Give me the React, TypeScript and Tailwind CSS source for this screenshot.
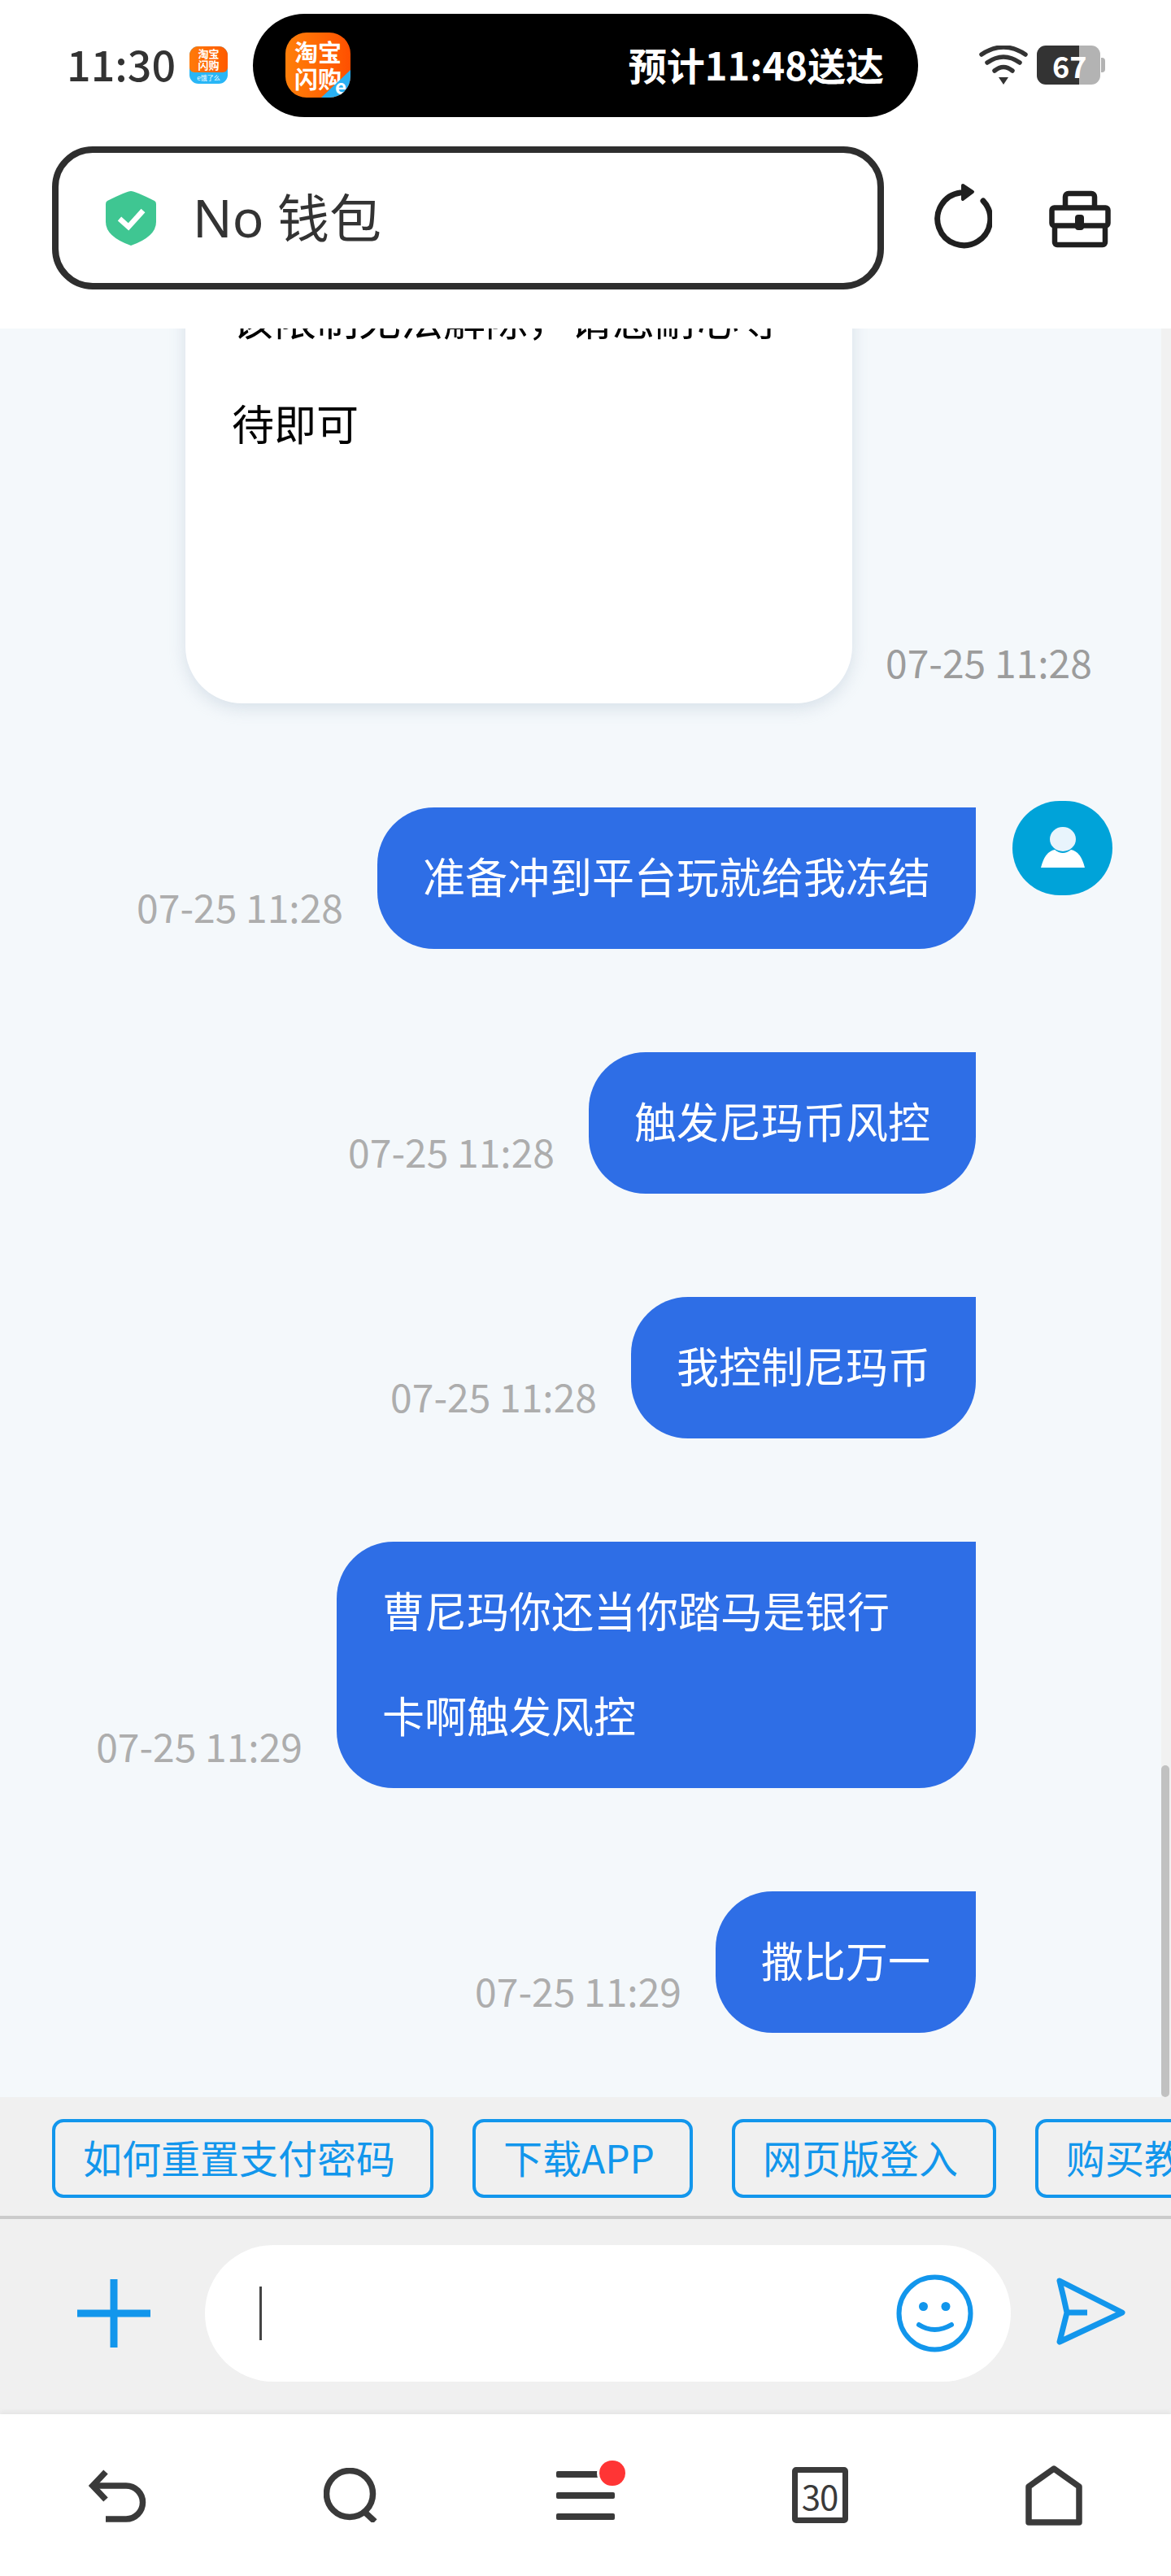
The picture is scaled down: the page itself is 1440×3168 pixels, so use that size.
import React from 'react';

const cjk = 'font-["Noto_Sans_CJK_SC","Noto_Sans",sans-serif]';

const messages = [
  { text: '准备冲到平台玩就给我冻结', time: '07-25 11:28', avatar: true },
  { text: '触发尼玛币风控', time: '07-25 11:28' },
  { text: '我控制尼玛币', time: '07-25 11:28' },
  { text: '曹尼玛你还当你踏马是银行卡啊触发风控', time: '07-25 11:29' },
  { text: '撒比万一', time: '07-25 11:29' },
];

const chips = ['如何重置支付密码', '下载APP', '网页版登入', '购买教程'];

function SmallAppIcon() {
  return (
    <div className="flex h-[46px] w-[47px] shrink-0 flex-col overflow-hidden rounded-[11px] bg-[#29b6f6] font-bold text-white">
      <div className="flex h-[32px] flex-col items-center justify-center rounded-b-[6px] bg-gradient-to-r from-[#ff7a0a] to-[#ff5a00] text-[13px] leading-[14px]">
        <span>淘宝</span>
        <span>闪购</span>
      </div>
      <div className="flex flex-1 items-center justify-center text-[8px] leading-none font-normal">e饿了么</div>
    </div>
  );
}

function AppIcon() {
  return (
    <div className="relative flex h-[80px] w-[80px] shrink-0 flex-col items-center justify-center overflow-hidden rounded-[26px] bg-gradient-to-r from-[#ff7f0a] to-[#ff4f00] text-[29px] leading-[33px] font-bold text-white">
      <span>淘宝</span>
      <span>闪购</span>
      <svg className="absolute right-0 bottom-0" width="36" height="34" viewBox="0 0 36 34">
        <polygon points="36,0 36,34 0,34" fill="#2ab0f2" />
      </svg>
      <span className="absolute right-[5px] bottom-[2px] text-[24px] leading-[24px] font-bold text-white">e</span>
    </div>
  );
}

function Wifi() {
  return (
    <svg width="60" height="48" viewBox="0 0 60 48" fill="none" stroke="#333" strokeWidth="5.5" strokeLinecap="round">
      <path d="M3 11Q30 -7 57 11" />
      <path d="M10 21Q30 7 50 21" />
      <path d="M19 31Q30 22 41 31" />
      <polygon points="24,39 36,39 30,48" fill="#333" stroke="none" />
    </svg>
  );
}

function Battery() {
  return (
    <div className="flex h-[48px] items-center">
      <div className="relative z-10 flex h-full w-[52px] items-center rounded-l-[11px] bg-[#333] pl-[19px] text-[36px] leading-none font-bold whitespace-nowrap text-white">
        67
      </div>
      <div className="h-full w-[26px] rounded-r-[11px] bg-[#b3b3b3]" />
      <div className="ml-[1px] h-[18px] w-[5px] rounded-r-[4px] bg-[#b3b3b3]" />
    </div>
  );
}

function Shield() {
  return (
    <svg width="62" height="67" viewBox="0 0 62 67" className="shrink-0">
      <path d="M31 0Q36 0 60 12Q62 13 62 16V38Q62 56 31 67Q0 56 0 38V16Q0 13 2 12Q26 0 31 0Z" fill="#3fc692" />
      <path d="M17 34L28 44L46 24" fill="none" stroke="#fff" strokeWidth="6.5" />
    </svg>
  );
}

function RefreshIcon() {
  return (
    <svg width="77" height="82" viewBox="0 0 77 82" fill="none" stroke="#1f1f1f" strokeWidth="7" strokeLinecap="round">
      <path d="M66 22A32.5 32.5 0 1 1 38 12" />
      <polygon points="41,3 53,11 41,20" fill="#1f1f1f" strokeWidth="4" strokeLinejoin="round" />
    </svg>
  );
}

function ToolboxIcon() {
  return (
    <svg width="76" height="75" viewBox="0 0 76 75" fill="none" stroke="#1f1f1f" strokeWidth="6.5" strokeLinejoin="round">
      <rect x="3.5" y="25.5" width="69" height="22" rx="3" />
      <path d="M20 25V12a4 4 0 0 1 4-4H52a4 4 0 0 1 4 4V25" />
      <path d="M7 47V68a3 3 0 0 0 3 3H66a3 3 0 0 0 3-3V47" />
      <rect x="32" y="34" width="11" height="19" rx="4" fill="#1f1f1f" stroke="none" />
    </svg>
  );
}

function Bubble({ text, time, avatar }: { text: string; time: string; avatar?: boolean }) {
  return (
    <div className="flex items-start justify-end">
      <div className="flex items-end">
        <span className="mr-[42px] mb-[29px] text-[48px] leading-none whitespace-nowrap text-[#adadad]">{time}</span>
        <div className="max-w-[786px] rounded-[70px] rounded-tr-none bg-[#2e6ee6] px-[56px] pt-[19px] pb-[26px] text-[52px] leading-[129px] text-white">
          {text}
        </div>
      </div>
      {avatar ? (
        <div className="-mt-[8px] ml-[45px] flex h-[116px] w-[123px] shrink-0 items-center justify-center rounded-full bg-[#00a3d9]">
          <svg width="56" height="52" viewBox="0 0 56 52" fill="#fff">
            <ellipse cx="28" cy="15" rx="16" ry="15" fill="#e8f4fc" />
            <path d="M1 50Q6 30 18 28Q28 36 38 28Q50 30 55 50Z" />
          </svg>
        </div>
      ) : (
        <div className="ml-[45px] w-[123px] shrink-0" />
      )}
    </div>
  );
}

export default function App() {
  return (
    <div className={`flex h-[3168px] w-[1440px] flex-col overflow-hidden bg-white ${cjk}`}>
      {/* status bar */}
      <div className="flex h-[160px] shrink-0 items-center pl-[82px]">
        <span className="mb-[4px] w-[128px] text-[52px] leading-none font-medium text-[#333]">11:30</span>
        <div className="ml-[23px]">
          <SmallAppIcon />
        </div>
        <div className="ml-[31px] flex h-[127px] w-[818px] items-center justify-between rounded-full bg-black pr-[42px] pl-[40px]">
          <AppIcon />
          <span className="mb-[4px] text-[47px] leading-none font-bold whitespace-nowrap text-white">预计11:48送达</span>
        </div>
        <div className="ml-[75px]">
          <Wifi />
        </div>
        <div className="ml-[11px]">
          <Battery />
        </div>
      </div>

      {/* address bar */}
      <div className="flex h-[244px] shrink-0 items-start pt-[20px] pl-[64px]">
        <div className="flex h-[176px] w-[1023px] items-center rounded-[50px] border-[8px] border-[#2e2e2e] pl-[58px]">
          <Shield />
          <span className='ml-[45px] font-["Noto_Sans","Noto_Sans_CJK_SC",sans-serif] text-[64px] leading-none text-[#333]'>No 钱包</span>
        </div>
        <div className="mt-[45px] ml-[56px]">
          <RefreshIcon />
        </div>
        <div className="mt-[50px] ml-[70px]">
          <ToolboxIcon />
        </div>
      </div>

      {/* chat */}
      <div className="flex h-[2175px] shrink-0 bg-[#f4f8fb]">
        <div className="flex min-w-0 flex-1 flex-col justify-end gap-[127px] overflow-hidden pr-[60px] pb-[79px]">
          <div className="ml-[228px] flex shrink-0 items-end">
            <div className="mb-[1px] w-[820px] rounded-[70px] rounded-tr-none bg-white px-[57px] pt-[22px] pb-[281px] text-[52px] leading-[129px] text-black shadow-[0_6px_20px_rgba(180,195,210,0.45)]">
              该限制无法解除，请您耐心等待即可
            </div>
            <span className="mb-[29px] ml-[41px] text-[48px] leading-none whitespace-nowrap text-[#9c9c9c]">07-25 11:28</span>
          </div>
          {messages.map((m, i) => (
            <div key={i} className="shrink-0">
              <Bubble text={m.text} time={m.time} avatar={m.avatar} />
            </div>
          ))}
        </div>
        {/* scrollbar */}
        <div className="flex w-[12px] shrink-0 flex-col justify-end bg-[#f1f1f1]">
          <div className="h-[408px] w-[10px] rounded-full bg-[#c1c1c1]" />
        </div>
      </div>

      {/* quick questions */}
      <div className="flex h-[150px] shrink-0 items-start gap-[48px] overflow-hidden border-b-[4px] border-[#cbcbcb] bg-[#f0f0f0] pt-[27px] pl-[64px]">
        {chips.map((c) => (
          <div
            key={c}
            className="flex h-[97px] shrink-0 items-center rounded-[14px] border-[4px] border-[#1296ec] pr-[43px] pb-[6px] pl-[34px] text-[48px] leading-none whitespace-nowrap text-[#1296ec]"
          >
            {c}
          </div>
        ))}
      </div>

      {/* input */}
      <div className="h-[240px] shrink-0 bg-[#f0f0f0] pt-[32px]">
        <div className="flex h-[168px] items-center pl-[95px]">
          <svg width="90" height="84" viewBox="0 0 90 84" stroke="#1296ec" className="shrink-0">
            <path d="M0 42H90" strokeWidth="9" />
            <path d="M45 0V84" strokeWidth="9" />
          </svg>
          <div className="ml-[67px] flex h-[168px] w-[991px] items-center justify-between rounded-full bg-white pr-[46px] pl-[67px]">
            <div className="h-[66px] w-[3px] bg-[#444]" />
            <svg width="95" height="96" viewBox="0 0 95 96" fill="none" stroke="#1296ec" strokeWidth="6">
              <ellipse cx="47.5" cy="48" rx="44" ry="44.5" />
              <circle cx="33.5" cy="39.5" r="5.5" fill="#1296ec" stroke="none" />
              <circle cx="61" cy="39.5" r="5.5" fill="#1296ec" stroke="none" />
              <path d="M28 62Q47 74 68 62" strokeLinecap="round" />
            </svg>
          </div>
          <svg width="85" height="84" viewBox="0 0 85 84" fill="none" stroke="#1296ec" strokeWidth="7" strokeLinejoin="round" className="mb-[6px] ml-[56px] shrink-0">
            <path d="M4 5L81 44L4 80Q9 60 13 44Q9 25 4 5Z" />
            <path d="M13 44H38" />
          </svg>
        </div>
      </div>

      {/* bottom nav */}
      <div className="grid flex-1 grid-cols-5 items-center bg-white text-[#3a3a3a] shadow-[0_-3px_6px_rgba(0,0,0,0.05)]">
        <div className="flex justify-center">
          <svg width="71" height="66" viewBox="0 0 71 66" fill="none" stroke="#3a3a3a" strokeWidth="7.5">
            <path d="M21 4L5 21L21 38" />
            <path d="M5 21H46A20.5 20.5 0 0 1 46 62H21" />
          </svg>
        </div>
        <div className="flex justify-center">
          <svg width="68" height="67" viewBox="0 0 68 67" fill="none" stroke="#3a3a3a" strokeWidth="7.5">
            <circle cx="32" cy="32" r="28.5" />
            <path d="M49 53L63 66" />
          </svg>
        </div>
        <div className="flex justify-center">
          <div className="relative flex w-[72px] flex-col gap-[18px]">
            <div className="h-[8px] rounded-[2px] bg-[#3a3a3a]" />
            <div className="h-[8px] rounded-[2px] bg-[#3a3a3a]" />
            <div className="h-[8px] rounded-[2px] bg-[#3a3a3a]" />
            <div className="absolute top-[-13px] left-[53px] h-[31px] w-[32px] rounded-full bg-[#ff3535] ring-[3px] ring-white" />
          </div>
        </div>
        <div className="flex justify-center">
          <div className="flex h-[69px] w-[69px] items-center justify-center rounded-[5px] border-[7px] border-[#3a3a3a] text-[42px] leading-none tracking-[-1px]">
            30
          </div>
        </div>
        <div className="flex justify-center">
          <svg width="70" height="74" viewBox="0 0 70 74" fill="none" stroke="#3a3a3a" strokeWidth="7.5" strokeLinejoin="round">
            <path d="M35 4L66 26V70H4V26Z" />
          </svg>
        </div>
      </div>
    </div>
  );
}
